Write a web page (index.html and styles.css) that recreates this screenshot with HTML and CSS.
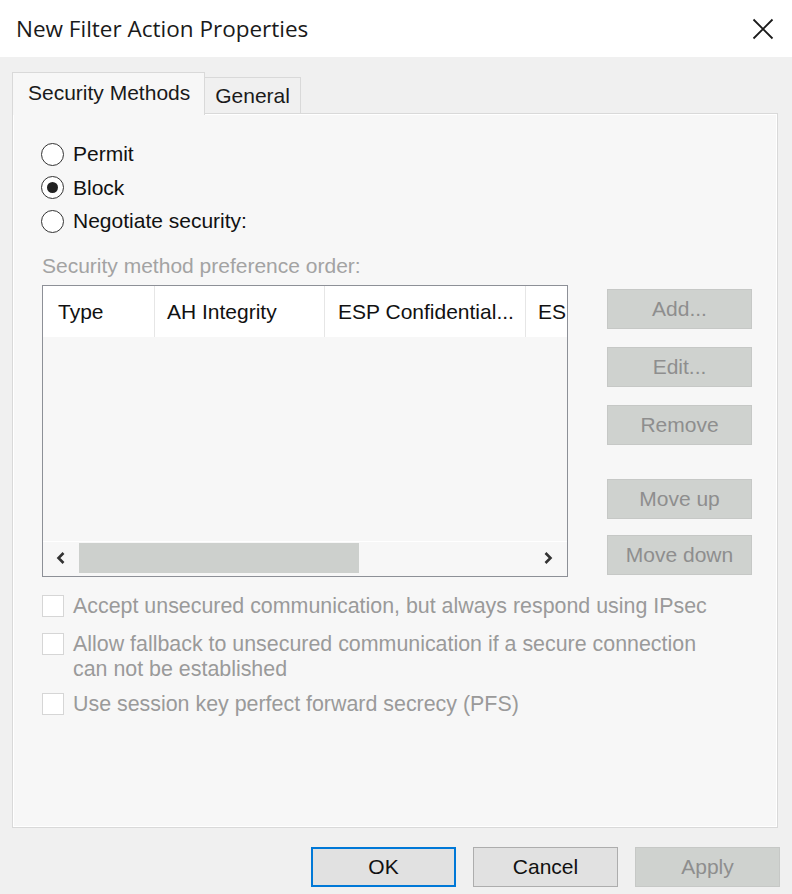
FILE: index.html
```html
<!DOCTYPE html>
<html lang="en">
<head>
<meta charset="utf-8">
<title>New Filter Action Properties</title>
<link rel="stylesheet" href="styles.css">
</head>
<body>
<div class="window">
  <header class="titlebar">
    <div class="title">New Filter Action Properties</div>
    <button class="close" aria-label="Close">
      <svg width="22" height="22" viewBox="0 0 22 22"><path d="M1.5 1.5 L20.5 20.5 M20.5 1.5 L1.5 20.5" stroke="#1a1a1a" stroke-width="1.8" fill="none"/></svg>
    </button>
  </header>

  <main class="client">
    <div class="tabs">
      <div class="tab active">Security Methods</div>
      <div class="tab">General</div>
    </div>

    <section class="panel">
      <div class="radios">
        <label class="radio"><span class="dot"></span>Permit</label>
        <label class="radio"><span class="dot checked"></span>Block</label>
        <label class="radio"><span class="dot"></span>Negotiate security:</label>
      </div>

      <div class="caption">Security method preference order:</div>

      <div class="methods">
        <div class="listbox">
          <div class="list-header">
            <div class="col col-type">Type</div>
            <div class="col col-ah">AH Integrity</div>
            <div class="col col-esp">ESP Confidential...</div>
            <div class="col col-es">ES</div>
          </div>
          <div class="list-body"></div>
          <div class="hscroll">
            <svg class="arrow" width="12" height="14" viewBox="0 0 12 14"><path d="M8.5 2 L3.5 7 L8.5 12" stroke="#333" stroke-width="2.6" fill="none"/></svg>
            <div class="track"><div class="thumb"></div></div>
            <svg class="arrow" width="12" height="14" viewBox="0 0 12 14"><path d="M3.5 2 L8.5 7 L3.5 12" stroke="#333" stroke-width="2.6" fill="none"/></svg>
          </div>
        </div>

        <div class="side-buttons">
          <button class="btn disabled">Add...</button>
          <button class="btn disabled">Edit...</button>
          <button class="btn disabled">Remove</button>
          <button class="btn disabled move-up">Move up</button>
          <button class="btn disabled move-down">Move down</button>
        </div>
      </div>

      <div class="checks">
        <label class="check"><span class="box"></span><span class="check-text">Accept unsecured communication, but always respond using IPsec</span></label>
        <label class="check"><span class="box"></span><span class="check-text">Allow fallback to unsecured communication if a secure connection<br>can not be established</span></label>
        <label class="check"><span class="box"></span><span class="check-text">Use session key perfect forward secrecy (PFS)</span></label>
      </div>
    </section>

    <footer class="actions">
      <button class="btn default">OK</button>
      <button class="btn normal">Cancel</button>
      <button class="btn disabled">Apply</button>
    </footer>
  </main>
</div>
</body>
</html>
```

FILE: styles.css
```css
* { box-sizing: border-box; }

html, body {
  margin: 0;
  padding: 0;
}

body {
  width: 792px;
  height: 894px;
  overflow: hidden;
  background: #f0f0f0;
  font-family: "Liberation Sans", Arial, sans-serif;
  font-size: 21px;
  color: #1a1a1a;
}

.window {
  display: flex;
  flex-direction: column;
  height: 100%;
}

/* title bar */
.titlebar {
  height: 57px;
  background: #ffffff;
  display: flex;
  align-items: center;
  justify-content: space-between;
  padding: 0 18px 0 16px;
}

.title {
  font-family: "Open Sans", "Noto Sans", sans-serif;
  font-size: 22.5px;
  color: #1a1a1a;
}

.close {
  border: 0;
  background: none;
  padding: 0;
  width: 22px;
  height: 22px;
  display: flex;
}

/* dialog client area */
.client {
  flex: 1;
  display: flex;
  flex-direction: column;
  padding: 15px 14px 0 12px;
}

.tabs {
  display: flex;
  align-items: flex-end;
  height: 41px;
  position: relative;
  z-index: 1;
}

.tab {
  border: 1px solid #d9d9d9;
  border-bottom: 0;
  background: #f0f0f0;
  height: 36px;
  padding: 0 10px;
  display: flex;
  align-items: center;
}

.tab.active {
  height: 43px;
  margin-bottom: -2px;
  padding: 0 14px 2px 15px;
  background: #f7f7f7;
  border-color: #d9d9d9;
}

.tab + .tab {
  border-left: 0;
}

.panel {
  height: 715px;
  border: 1px solid #d9d9d9;
  box-shadow: inset 1px 1px 0 #ffffff, inset -1px -1px 0 #ffffff;
  background: #f7f7f7;
  padding: 23px 24px 0 28px;
  display: flex;
  flex-direction: column;
}

/* option buttons */
.radios {
  display: flex;
  flex-direction: column;
}

.radio {
  height: 34px;
  display: flex;
  align-items: center;
  gap: 9px;
  color: #111;
}

.radio:nth-child(2) { height: 33px; }

.dot {
  width: 23px;
  height: 23px;
  border-radius: 50%;
  border: 1.5px solid #333;
  background: #fff;
  display: flex;
  align-items: center;
  justify-content: center;
  flex: none;
}

.dot.checked::after {
  content: "";
  width: 11px;
  height: 11px;
  border-radius: 50%;
  background: #222;
}

.caption {
  margin-top: 16px;
  height: 24px;
  line-height: 24px;
  color: #a3a3a3;
  font-size: 21px;
  margin-left: 1px;
}

/* list view + side buttons */
.methods {
  display: flex;
  margin-top: 7px;
  gap: 39px;
  margin-left: 1px;
}

.listbox {
  width: 526px;
  height: 292px;
  border: 1.5px solid #8d9097;
  background: #f7f7f7;
  display: flex;
  flex-direction: column;
  overflow: hidden;
}

.list-header {
  height: 51px;
  background: #ffffff;
  display: flex;
  flex: none;
}

.col {
  display: flex;
  align-items: center;
  border-right: 1px solid #e6e6e6;
  white-space: nowrap;
  flex: none;
  color: #111;
}

.col-type { width: 112px; padding-left: 15px; }
.col-ah { width: 170px; padding-left: 12px; }
.col-esp { width: 201px; padding-left: 13px; }
.col-es { width: 60px; padding-left: 12px; border-right: 0; }

.list-body {
  flex: 1;
  background: #f7f7f7;
}

.hscroll {
  height: 35px;
  flex: none;
  display: flex;
  align-items: center;
  padding: 0 13px 2px 12px;
  border-top: 1px solid #ffffff;
}

.arrow { flex: none; }

.track {
  flex: 1;
  height: 30px;
  padding: 0 0 0 12px;
}

.thumb {
  width: 280px;
  height: 30px;
  background: #cdd0cd;
}

.side-buttons {
  display: flex;
  flex-direction: column;
  gap: 18px;
  padding-top: 4px;
}

.side-buttons .move-up {
  margin-top: 16px;
}

.side-buttons .move-down {
  margin-top: -2px;
}

.btn {
  width: 145px;
  height: 40px;
  font-family: "Liberation Sans", Arial, sans-serif;
  font-size: 21px;
  border: 1px solid #adadad;
  background: #e1e1e1;
  color: #111;
  padding: 0;
}

.btn.disabled {
  background: #cfd2cf;
  border-color: #c6c8c6;
  color: #8e8e8e;
}

.btn.default {
  border: 2px solid #0078d7;
}

/* check boxes */
.checks {
  margin-top: 17px;
  display: flex;
  flex-direction: column;
  gap: 13px;
  margin-left: 1px;
}

.check {
  display: flex;
  align-items: flex-start;
  gap: 9px;
  color: #9a9a9a;
  font-size: 21.4px;
  line-height: 25px;
}

.box {
  width: 22px;
  height: 22px;
  flex: none;
  background: #ffffff;
  border: 1px solid #d6d6d6;
  margin-top: 1px;
}

.check:last-child { margin-top: -3px; }

/* dialog buttons */
.actions {
  display: flex;
  justify-content: flex-end;
  gap: 17px;
  margin-top: 19px;
  margin-right: -2px;
}
```
